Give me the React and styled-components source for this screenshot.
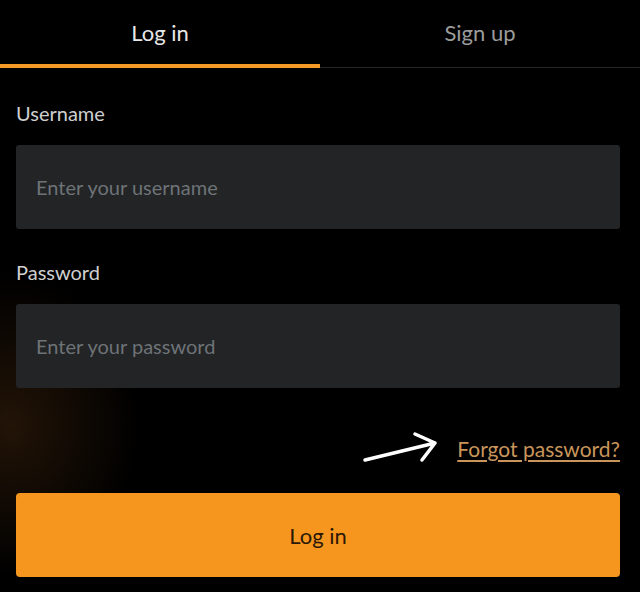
import React from "react";
import styled, { createGlobalStyle } from "styled-components";

const GlobalStyle = createGlobalStyle`
  html, body {
    margin: 0;
    padding: 0;
    background: #000;
  }
  body {
    font-family: Lato, "Open Sans", sans-serif;
  }
`;

// === STYLES ===

const Page = styled.div`
  width: 640px;
  height: 592px;
  overflow: hidden;
  background:
    radial-gradient(ellipse 130px 150px at 10px 425px, rgba(90, 52, 18, 0.38), rgba(0, 0, 0, 0) 100%),
    #000;
  display: flex;
  flex-direction: column;
`;

const Tabs = styled.div`
  display: flex;
  border-bottom: 1px solid #262626;
`;

const Tab = styled.button`
  flex: 1;
  height: 68px;
  padding: 0;
  background: none;
  border: 0;
  border-bottom: 4px solid ${(p) => (p.$active ? "#f39a26" : "transparent")};
  margin-bottom: -1px;
  color: ${(p) => (p.$active ? "#e8e8e8" : "#9c9c9c")};
  font-family: Lato, sans-serif;
  font-size: 22px;
  cursor: pointer;
`;

const Form = styled.div`
  display: flex;
  flex-direction: column;
  padding: 0 20px 0 16px;
`;

const Label = styled.div`
  color: #cfcfcf;
  font-size: 20px;
  line-height: 24px;
  margin-top: ${(p) => p.$top}px;
  margin-bottom: 20px;
`;

const Input = styled.input`
  height: 84px;
  box-sizing: border-box;
  background: #222425;
  border: 0;
  border-radius: 3px;
  padding: 0 20px;
  color: #ddd;
  font-family: Lato, sans-serif;
  font-size: 20px;
  outline: none;

  &::placeholder {
    color: #6e7378;
  }
`;

const ForgotRow = styled.div`
  display: flex;
  justify-content: flex-end;
  align-items: center;
  gap: 16px;
  margin-top: 43px;
  height: 34px;
`;

const ForgotLink = styled.a`
  color: #c9955b;
  font-size: 21px;
  text-decoration: underline;
  text-underline-offset: 3px;
  cursor: pointer;
`;

const SubmitButton = styled.button`
  margin-top: 28px;
  height: 84px;
  background: #f7961e;
  border: 0;
  border-radius: 4px;
  color: #2a1808;
  font-family: Lato, sans-serif;
  font-size: 22px;
  cursor: pointer;
`;

const Arrow = () => (
  <svg width="80" height="34" viewBox="0 0 80 34" fill="none">
    <path
      d="M4 29 L74 12 M54 3 L74 12 L61 29"
      stroke="#fff"
      strokeWidth="3.5"
      strokeLinecap="round"
      strokeLinejoin="round"
    />
  </svg>
);

export default function App() {
  return (
    <>
      <GlobalStyle />
      <Page>
        <Tabs>
          <Tab $active>Log in</Tab>
          <Tab>Sign up</Tab>
        </Tabs>
        <Form>
          <Label $top={33}>Username</Label>
          <Input placeholder="Enter your username" />
          <Label $top={31}>Password</Label>
          <Input type="password" placeholder="Enter your password" />
          <ForgotRow>
            <Arrow />
            <ForgotLink>Forgot password?</ForgotLink>
          </ForgotRow>
          <SubmitButton>Log in</SubmitButton>
        </Form>
      </Page>
    </>
  );
}
